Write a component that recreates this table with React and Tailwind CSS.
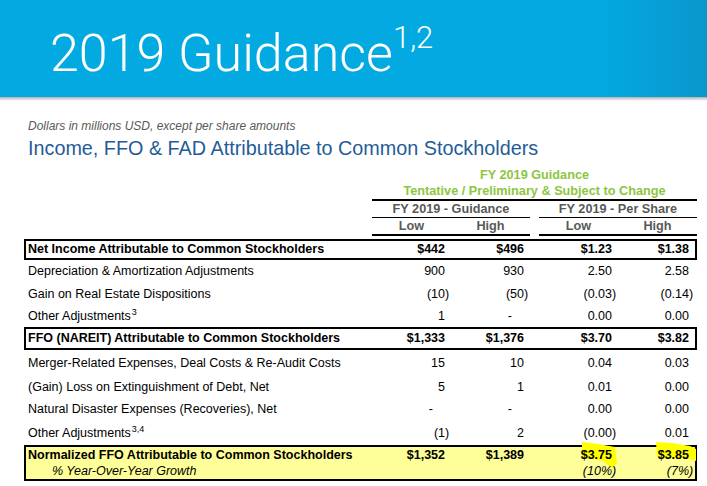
import React from "react";

function Num({ v, italic }) {
  if (v === "") return <div />;
  if (v === "-") {
    return <div className="pr-[18px] text-right">-</div>;
  }
  if (v.startsWith("(")) {
    return (
      <div className={"pr-[6px] text-right whitespace-nowrap " + (italic ? "italic" : "")}>
        {v.slice(0, -1)}
        <span className="inline-block w-0">)</span>
      </div>
    );
  }
  return <div className="pr-[6px] text-right whitespace-nowrap">{v}</div>;
}

const GRID = "grid grid-cols-[346px_79px_79px_9px_79px_77px] items-center";

function Row({ label, vals, h, bold, boxed, sup }) {
  return (
    <div
      className={
        (boxed ? "border-2 border-black " : "border-x-2 border-transparent ") +
        (bold ? "font-bold " : "")
      }
    >
      <div className={GRID + " " + h}>
        <div className="pl-[2px] whitespace-nowrap">
          {label}
          {sup && <sup className="text-[9px] relative -top-[5px] ml-[1px]">{sup}</sup>}
        </div>
        <Num v={vals[0]} />
        <Num v={vals[1]} />
        <div />
        <Num v={vals[2]} />
        <Num v={vals[3]} />
      </div>
    </div>
  );
}

export default function App() {
  return (
    <div className="w-[707px] h-[486px] overflow-hidden bg-white font-['Liberation_Sans',Arial,sans-serif] text-black">
      {/* Header bar */}
      <div className="h-[97px] bg-gradient-to-r from-[#03a9e1] via-[#03a9e1] via-85% to-[#0a96cd] pl-[50px] pt-[26px]">
        <div className="font-['Roboto',sans-serif] font-light text-white text-[52px] leading-[55px] whitespace-nowrap">
          2019 Guidance
          <span className="text-[31px] leading-none align-top relative -top-[4px]">1,2</span>
        </div>
      </div>
      <div className="h-[4px] bg-gradient-to-b from-[#b0b0b0] to-white" />

      <div className="pl-[24px] pr-[10px]">
        <div className="pl-[4px] mt-[18px] text-[12px] leading-[14px] italic text-[#595959]">
          Dollars in millions USD, except per share amounts
        </div>
        <div className="pl-[4px] mt-[4px] text-[19.8px] leading-[22px] text-[#1f5c99] whitespace-nowrap">
          Income, FFO &amp; FAD Attributable to Common Stockholders
        </div>

        {/* Column headers */}
        <div className="mt-[8px] grid grid-cols-[348px_325px] text-[12.7px] font-bold">
          <div />
          <div>
            <div className="text-center text-[#8dc63f] leading-[16px]">FY 2019 Guidance</div>
            <div className="text-center text-[#8dc63f] leading-[16px] whitespace-nowrap">
              Tentative / Preliminary &amp; Subject to Change
            </div>
            <div className="h-[1.5px] bg-black" />
            <div className="grid grid-cols-[158px_9px_158px] text-[#595959]">
              <div>
                <div className="text-center leading-[16px] whitespace-nowrap">FY 2019 - Guidance</div>
                <div className="h-[1.5px] bg-black" />
                <div className="grid grid-cols-2 leading-[16px]">
                  <div className="text-center">Low</div>
                  <div className="text-center">High</div>
                </div>
                <div className="h-[1.5px] bg-black" />
              </div>
              <div />
              <div>
                <div className="text-center leading-[16px] whitespace-nowrap">FY 2019 - Per Share</div>
                <div className="h-[1.5px] bg-black" />
                <div className="grid grid-cols-2 leading-[16px]">
                  <div className="text-center">Low</div>
                  <div className="text-center">High</div>
                </div>
                <div className="h-[1.5px] bg-black" />
              </div>
            </div>
          </div>
        </div>

        {/* Body */}
        <div className="mt-[3px] text-[12.5px] leading-[14px]">
          <Row
            label="Net Income Attributable to Common Stockholders"
            vals={["$442", "$496", "$1.23", "$1.38"]}
            h="h-[17px]"
            bold
            boxed
          />
          <Row label="Depreciation & Amortization Adjustments" vals={["900", "930", "2.50", "2.58"]} h="h-[23px]" />
          <Row label="Gain on Real Estate Dispositions" vals={["(10)", "(50)", "(0.03)", "(0.14)"]} h="h-[23px]" />
          <Row label="Other Adjustments" sup="3" vals={["1", "-", "0.00", "0.00"]} h="h-[21px]" />
          <Row
            label="FFO (NAREIT) Attributable to Common Stockholders"
            vals={["$1,333", "$1,376", "$3.70", "$3.82"]}
            h="h-[19px]"
            bold
            boxed
          />
          <Row label="Merger-Related Expenses, Deal Costs & Re-Audit Costs" vals={["15", "10", "0.04", "0.03"]} h="h-[27px]" />
          <Row label="(Gain) Loss on Extinguishment of Debt, Net" vals={["5", "1", "0.01", "0.00"]} h="h-[21px]" />
          <Row label="Natural Disaster Expenses (Recoveries), Net" vals={["-", "-", "0.00", "0.00"]} h="h-[23px]" />
          <Row label="Other Adjustments" sup="3,4" vals={["(1)", "2", "(0.00)", "0.01"]} h="h-[24px]" />

          {/* Normalized FFO box */}
          <div className="relative border-2 border-black bg-[#ffff99]">
            <svg
              className="absolute left-[-2px] top-[-2px] w-[673px] h-[36px] overflow-visible pointer-events-none"
              viewBox="0 0 673 36"
            >
              <polygon fill="#ffff00" points="558,-3 574,-1 591,2 593,18 588,23 579,16 566,14 558,13" />
              <polygon fill="#ffff00" points="632,-3 648,-2 666,1 672,4 672,16 666,14 646,13 633,12" />
            </svg>
            <div className={GRID + " h-[16px] font-bold relative"}>
              <div className="pl-[2px] whitespace-nowrap">Normalized FFO Attributable to Common Stockholders</div>
              <Num v="$1,352" />
              <Num v="$1,389" />
              <div />
              <Num v="$3.75" />
              <Num v="$3.85" />
            </div>
            <div className={GRID + " h-[16px] italic relative"}>
              <div className="pl-[26px] whitespace-nowrap">% Year-Over-Year Growth</div>
              <div />
              <div />
              <div />
              <Num v="(10%)" italic />
              <Num v="(7%)" italic />
            </div>
          </div>
        </div>
      </div>
    </div>
  );
}
